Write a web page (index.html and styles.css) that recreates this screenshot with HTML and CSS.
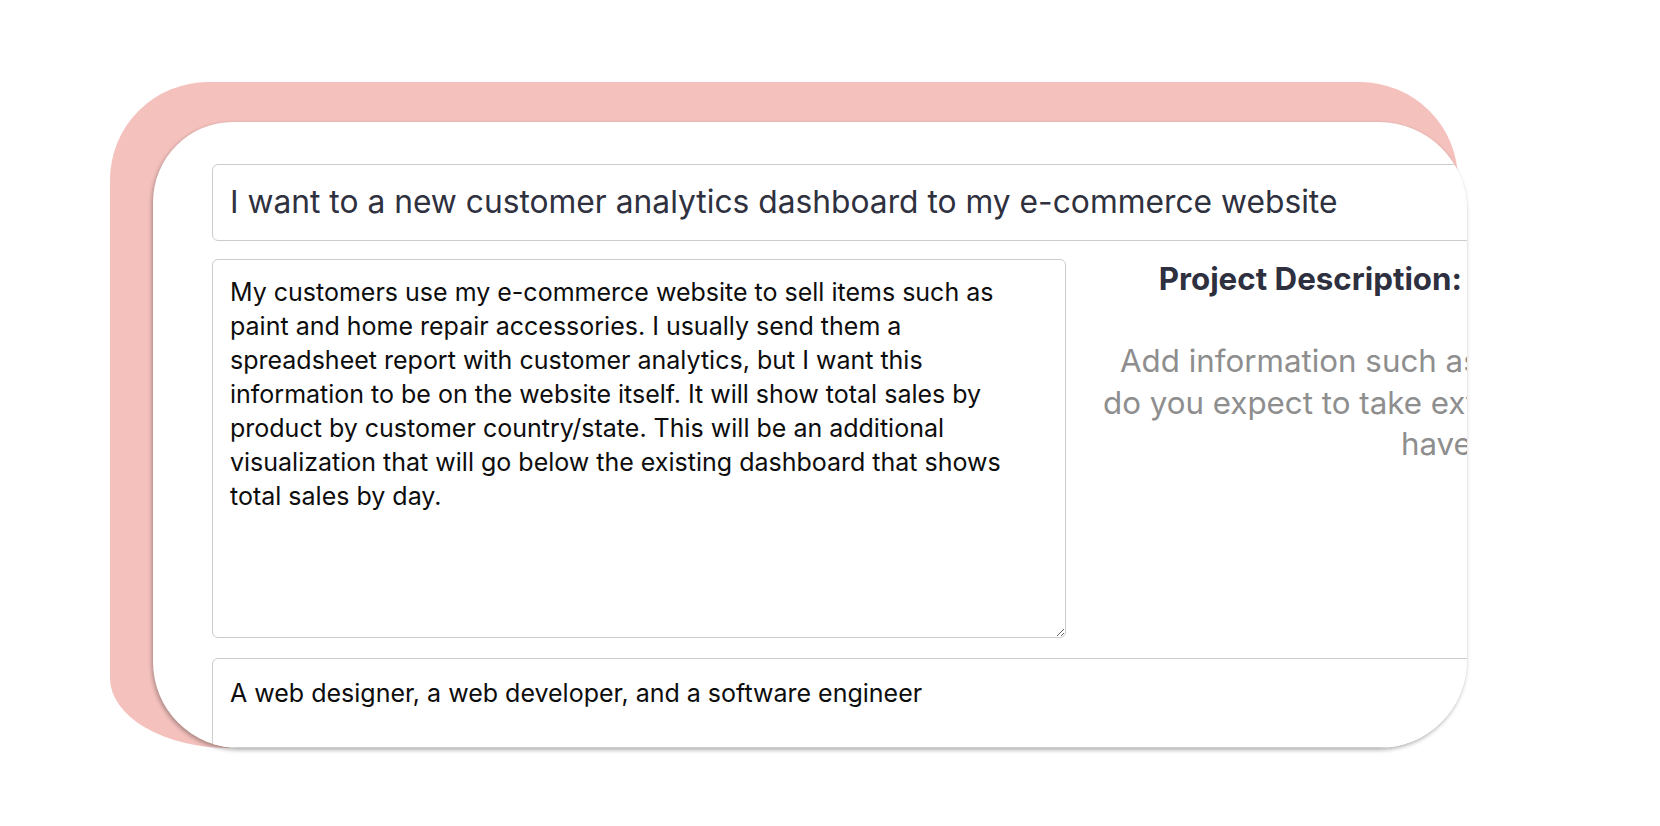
FILE: index.html
```html
<!DOCTYPE html>
<html lang="en">
<head>
<meta charset="utf-8">
<title>Project brief</title>
<link rel="stylesheet" href="styles.css">
</head>
<body>
<div class="stage">
  <div class="backdrop">
    <div class="card">
      <form class="content">
        <input class="title-field" type="text" value="I want to a new customer analytics dashboard to my e-commerce website">
        <div class="row">
          <textarea class="desc-field" wrap="off">My customers use my e-commerce website to sell items such as
paint and home repair accessories. I usually send them a
spreadsheet report with customer analytics, but I want this
information to be on the website itself. It will show total sales by
product by customer country/state. This will be an additional
visualization that will go below the existing dashboard that shows
total sales by day.</textarea>
          <aside class="side">
            <h2 class="side-title">Project Description:</h2>
            <p class="hint">
              <span class="hint-line l1">Add information such as how long</span>
              <span class="hint-line l2">do you expect to take extra time, and</span>
              <span class="hint-line l3">have in mind.</span>
            </p>
          </aside>
        </div>
        <input class="team-field" type="text" value="A web designer, a web developer, and a software engineer">
      </form>
    </div>
  </div>
</div>
</body>
</html>
```
FILE: styles.css
```css
* { box-sizing: border-box; }

html, body {
  margin: 0;
  padding: 0;
  background: #ffffff;
  font-family: "Inter", "Liberation Sans", sans-serif;
}

.stage {
  width: 1660px;
  height: 826px;
  padding: 82px 0 0 110px;
  overflow: hidden;
}

.backdrop {
  width: 1348px;
  height: 666px;
  padding: 40px 0 0 43px;
  background: #f4c1bd;
  border-radius: 98px 98px 98px 120px / 98px 98px 98px 70px;
}

.card {
  width: 1314px;
  height: 626px;
  background: #ffffff;
  border-radius: 80px 88px 88px 86px;
  overflow: hidden;
  box-shadow: -1px 2px 4px rgba(0, 0, 0, 0.32);
}

.content {
  width: 1420px;
  margin: 0;
  padding: 42px 0 0 59px;
  display: flex;
  flex-direction: column;
  gap: 18px;
}

.title-field,
.team-field,
.desc-field {
  font-family: "Inter", "Liberation Sans", sans-serif;
  border: 1px solid #cccccc;
  border-radius: 6px;
  background: #ffffff;
  outline: none;
  margin: 0;
}

.title-field {
  width: 1360px;
  height: 77px;
  padding: 0 17px 3px;
  font-size: 31.75px;
  color: #2f313f;
}

.row {
  display: flex;
  align-items: flex-start;
  height: 379px;
}

.desc-field {
  width: 854px;
  height: 379px;
  flex: none;
  padding: 15px 17px;
  font-size: 25px;
  line-height: 34px;
  color: #0d0d0d;
  resize: both;
  overflow: hidden;
  white-space: pre;
}

.side {
  width: 396px;
  flex: none;
}

.side-title {
  margin: 0;
  font-size: 31.3px;
  line-height: 40px;
  font-weight: 700;
  color: #2e3040;
  text-align: right;
}

.hint {
  margin: 42px 0 0 37px;
  font-size: 31.3px;
  line-height: 41.5px;
  color: #8e8e8e;
  white-space: nowrap;
}

.hint-line { display: block; }
.hint-line.l1 { margin-left: 17px; }
.hint-line.l3 { margin-left: 298px; }

.team-field {
  width: 1360px;
  height: 90px;
  margin-top: 2px;
  padding: 17px 17px 37px;
  font-size: 25px;
  color: #0d0d0d;
}
```
